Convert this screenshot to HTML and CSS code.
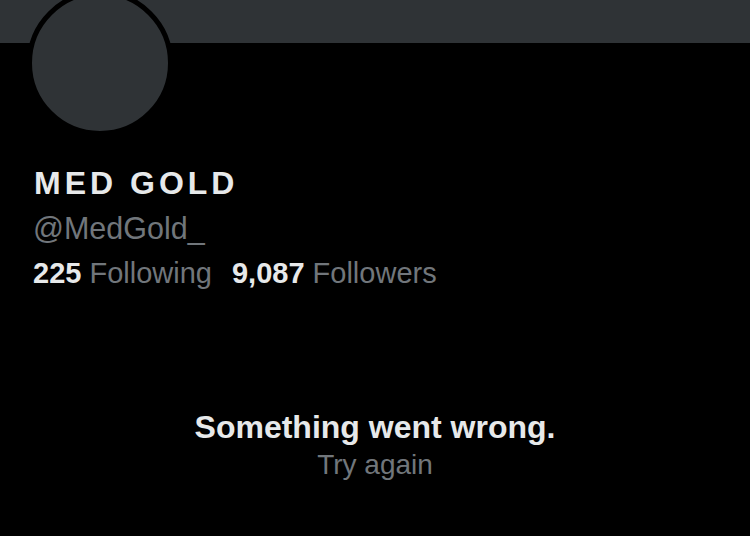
FILE: index.html
```html
<!DOCTYPE html>
<html lang="en">
<head>
  <meta charset="UTF-8" />
  <meta name="viewport" content="width=device-width, initial-scale=1.0"/>
  <title>MED GOLD (@MedGold_)</title>
  <link rel="stylesheet" href="styles.css">
</head>
<body>
  <div class="banner"></div>

  <div class="profile">
    <div class="avatar"></div>
    <h1 class="name">MED GOLD</h1>
    <div class="handle">@MedGold_</div>
    <div class="stats">
      <span><b>225</b> Following</span>
      <span><b>9,087</b> Followers</span>
    </div>
  </div>

  <div class="error">
    <div class="error-title">Something went wrong.</div>
    <div class="error-retry">Try again</div>
  </div>
</body>
</html>
```

FILE: styles.css
```css
body { margin: 0; background: #000; color: #e7e9ea; font-family: "Liberation Sans", Arial, sans-serif; height: 536px; overflow: hidden; }
.banner { height: 43px; background: #2f3336; }
.profile { padding-left: 27px; }
.avatar { width: 136px; height: 136px; border: 5px solid #000; border-radius: 50%; background: #2f3336; margin-top: -53px; }
.name { margin: 28px 0 0 7px; font-size: 32px; font-weight: bold; letter-spacing: 4px; line-height: 38px; }
.handle { margin: 8px 0 0 6px; font-size: 30.5px; color: #71767b; line-height: 36px; }
.stats { margin: 10px 0 0 6px; font-size: 29px; color: #71767b; line-height: 34px; display: flex; gap: 20px; }
.stats b { color: #e7e9ea; }
.error { margin-top: 118px; text-align: center; }
.error-title { font-size: 32px; font-weight: bold; line-height: 38px; }
.error-retry { margin-top: 2px; font-size: 28px; color: #71767b; line-height: 34px; }
```
